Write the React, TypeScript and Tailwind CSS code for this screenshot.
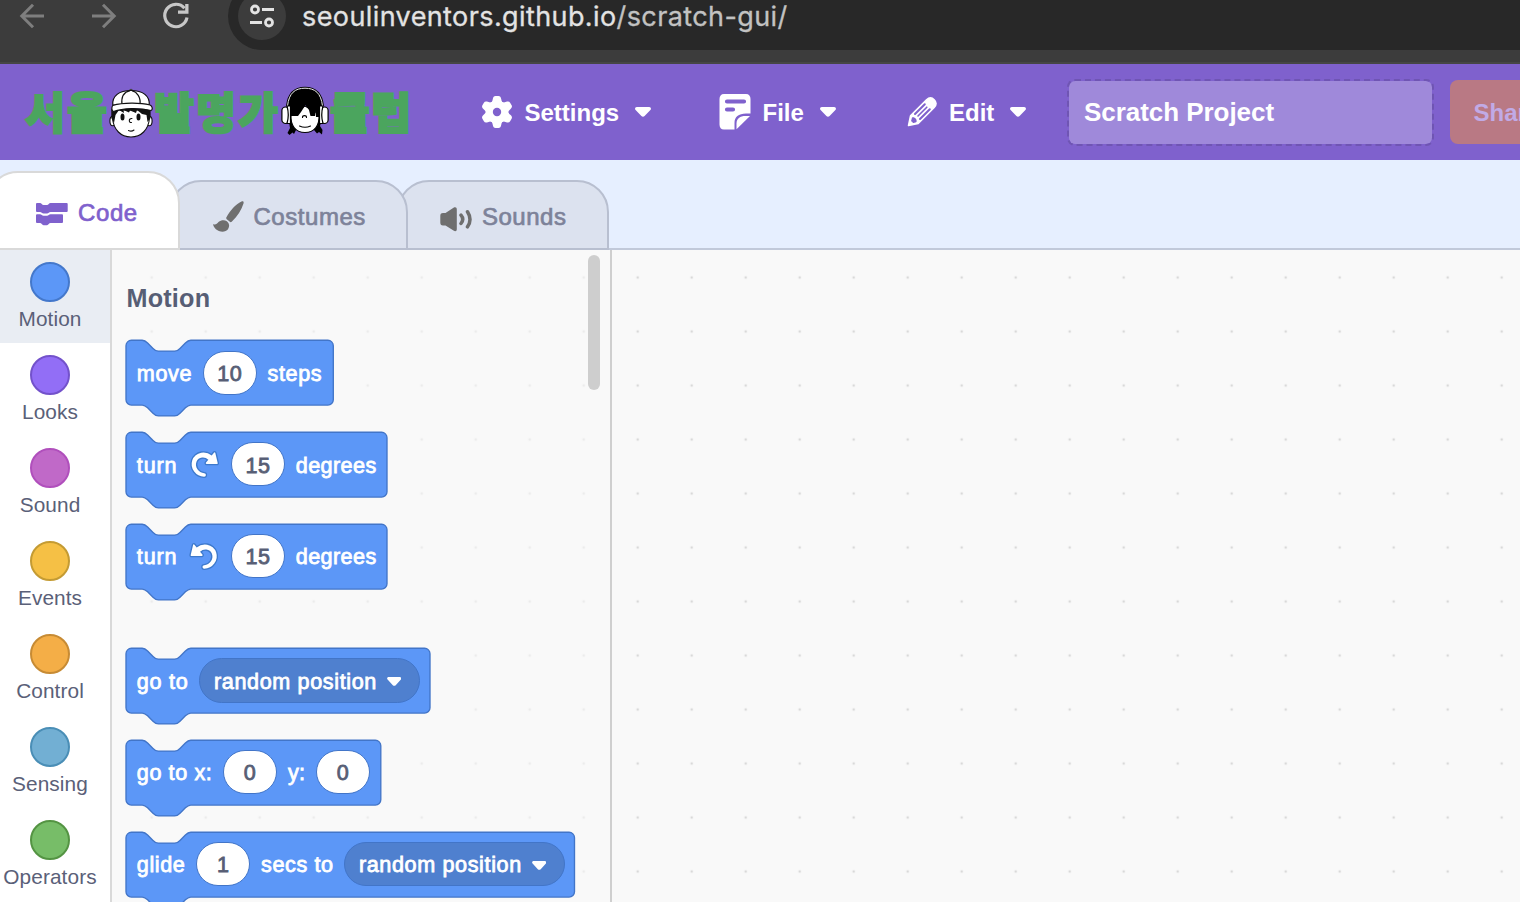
import type { ReactNode } from "react";

function Caret({ className = "" }: { className?: string }) {
  return (
    <svg className={className} width="16" height="10" viewBox="0 0 16 10" fill="#fff">
      <path d="M1.8 0H14.2C15.8 0 16.5 1.8 15.4 2.9L9.6 9.1C8.7 10 7.3 10 6.4 9.1L.6 2.9C-.5 1.8.2 0 1.8 0Z" />
    </svg>
  );
}

/* ---------- Browser toolbar ---------- */

function BrowserBar() {
  return (
    <div className="flex h-16 shrink-0 items-start overflow-hidden border-b-2 border-[#464646] bg-[#3c3c3c]">
      <svg className="shrink-0" width="228" height="50" fill="none" strokeWidth="3">
        <g stroke="#7e7e7e">
          <path d="M44 16H22M33 4.8L21.8 16L33 27.2" />
          <path d="M92 16H114M103 4.8L114.200 16L103 27.2" />
        </g>
        <path d="M184.500 8.200A11.200 11.200 0 1 0 187 17.500" stroke="#c7c7c7" strokeWidth="3.200" />
        <path d="M188.500 4V13.800H178V10.600H185.200V4Z" fill="#c7c7c7" />
      </svg>
      <div className="-mt-[18px] flex h-[68px] flex-1 items-center rounded-l-full bg-[#282828] pl-[10px]">
        <div className="flex size-12 items-center justify-center rounded-full bg-[#3c3c3c]">
          <svg width="48" height="48" fill="none" stroke="#e3e3e3" strokeWidth="2.800">
            <circle cx="17" cy="17.500" r="3.500" />
            <path d="M24 17.500H36M12 30.500H24" />
            <circle cx="31" cy="30.500" r="3.500" />
          </svg>
        </div>
        <div className="mt-[2px] ml-4 font-['Inter'] text-[27px] leading-8 tracking-[0.400px] whitespace-nowrap text-[#e3e3e3] [-webkit-text-stroke:0.300px_currentColor]">
          seoulinventors.github.io<span className="text-[#c2c2c2]">/scratch-gui/</span>
        </div>
      </div>
    </div>
  );
}

/* ---------- Logo ---------- */

function Syllables({ text, className = "" }: { text: string; className?: string }) {
  return (
    <div className={"flex " + className}>
      {text.split("").map((c) => (
        <span key={c} className="flex w-[42px] justify-center">
          {c}
        </span>
      ))}
    </div>
  );
}

function CapBoy() {
  return (
    <svg className="mt-[3px] shrink-0" width="44" height="50" viewBox="0 0 44 50">
      <g stroke="#111" strokeWidth="1.100">
        <ellipse cx="3.800" cy="33" rx="2.900" ry="4.800" fill="#fff" />
        <ellipse cx="40.200" cy="33" rx="2.900" ry="4.800" fill="#fff" />
        <path d="M3.500 22V30C4.500 42 12 49 22 49S39.500 42 40.500 30V22Z" fill="#fff" />
      </g>
      <path d="M2.300 21V30L5 35L6.500 27L10 22L15 25L14.500 22L20 24.500L21 22.500L27 25L28 22L33 26L37.500 27L38.500 34L41.600 30V21Z" fill="#111" />
      <ellipse cx="13.500" cy="29" rx="2" ry="3.600" fill="#111" />
      <ellipse cx="29.500" cy="29" rx="2" ry="3.600" fill="#111" />
      <g fill="none" stroke="#111" strokeWidth="1.100" strokeLinecap="round">
        <path d="M23 30.500C19.500 30 19.500 35 22.500 34.500M19.500 42.500Q22.500 44 25 42" />
      </g>
      <circle cx="22" cy="2.500" r="1.800" fill="#444" />
      <g fill="#fff" stroke="#111" strokeWidth="1.200">
        <path d="M3.800 17C3 8 10 2.500 22 2.500S41 8 40.200 17Z" />
        <path d="M13 17C12 9 15 4 21 2.700M31 17C32 9 28 4 23 2.700" fill="none" />
        <path d="M3.700 17.500C14 14.500 31 14.500 41 17C43.500 18 44 21.500 42 22.500C30 19.500 14 20 4.500 23.500C2.500 23 2.500 19 3.700 17.500Z" />
      </g>
    </svg>
  );
}

function HeadphoneGirl() {
  return (
    <svg className="shrink-0" width="48" height="50" viewBox="0 0 48 50">
      <path d="M7 30L9 42L6.500 47L8.500 49L11.500 46.500L13 48L15 44L33 44L36 47.500L38 46L41 48.500L41.500 44L39 40L42 30Z" fill="#000" />
      <path d="M10 28C9 40 15 46.500 24 46.500S39 40 38 28L24 20Z" fill="#fff" stroke="#000" strokeWidth="1.200" />
      <path d="M6 26C5 9 13 1.500 24 1.500S43 9 42 26L40 31H35L34.500 25L34 30H29.500L28 24L24.500 19L20 26L17 30H8Z" fill="#000" />
      <path d="M6.500 20C8 7 14 2.200 24 2.200S40 7 41.500 20" fill="none" stroke="#000" strokeWidth="3" />
      <path d="M6.500 20C8 7 14 2.200 24 2.200S40 7 41.500 20" fill="none" stroke="#eee" strokeWidth="1" />
      <g fill="#fff" stroke="#000" strokeWidth="1.200">
        <rect x=".9" y="21" width="7.200" height="16.500" rx="3.600" />
        <path d="M6 20H9.500V37.500H6Q8.500 29 6 20Z" />
        <rect x="39.900" y="21" width="7.200" height="16.500" rx="3.600" />
        <path d="M42 20H38.500V37.500H42Q39.500 29 42 20Z" />
      </g>
      <path d="M21.500 31.500C21.500 29 25.500 29 25.500 31.500M18.500 40Q24 42.500 29.500 40" fill="none" stroke="#000" strokeWidth="1.100" strokeLinecap="round" />
    </svg>
  );
}

function Logo() {
  return (
    <div className="-mt-[2px] flex w-[388px] shrink-0 items-center font-['Noto_Sans_CJK_KR',sans-serif] text-[43.500px] leading-[48px] font-black text-[#4ba55e] [-webkit-text-stroke:2px_#4ba55e]">
      <Syllables text="서울" className="w-[85px]" />
      <CapBoy />
      <Syllables text="발명가" className="w-[128px]" />
      <HeadphoneGirl />
      <Syllables text="클럽" className="w-[83px]" />
    </div>
  );
}

/* ---------- Menu bar ---------- */

function GearIcon() {
  return (
    <svg width="32" height="32" viewBox="-16 -16 32 32" fill="#fff">
      <circle r="11.300" />
      {[0, 60, 120, 180, 240, 300].map((a) => (
        <path
          key={a}
          transform={`rotate(${a})`}
          d="M-7.500 -8C-5 -9.500 -4.600 -11 -4.200 -13C-3.900 -15 -3 -16 -1.500 -16H1.500C3 -16 3.900 -15 4.200 -13C4.600 -11 5 -9.500 7.500 -8Z"
        />
      ))}
      <circle r="4.200" fill="#7f61cd" />
    </svg>
  );
}

function FileIcon() {
  return (
    <svg width="32" height="36" viewBox="0 0 32 36" fill="#fff">
      <path d="M5 0H27C30 0 31.500 2 31.500 5V19.500H27C19.500 19.500 15.500 23 15.500 29V35.500H5C2 35.500 .5 33.500 .5 30.500V5C.5 2 2 0 5 0Z" />
      <path d="M31 22L17.500 35.200V29.500C17.500 24.500 21 22 26.500 22Z" />
      <path d="M8 7.500H25M8 15.500H14" stroke="#7f61cd" strokeWidth="4.200" strokeLinecap="round" />
    </svg>
  );
}

function PencilIcon() {
  return (
    <svg width="30" height="30" viewBox="0 0 30 30" fill="none">
      <path
        d="M1.500 28.500L3.500 18.800L19.500 2.800C22 .5 25 .5 27.200 2.700C29.500 5 29.500 8 27.200 10.500L11.200 26.500L1.500 28.500Z"
        fill="#fff"
        stroke="#fff"
        strokeWidth="1.500"
        strokeLinejoin="round"
      />
      <g stroke="#7f61cd" strokeLinecap="round">
        <path d="M8 17L17.800 7.200M13 22L22.800 12.200" strokeWidth="2" />
        <path d="M11 19L19.800 10.200" strokeWidth="1.600" />
      </g>
      <path d="M5 20.500C7.500 19.500 10.500 22.500 9.500 25C8 25.800 6.800 26 6 26C5.600 25 4.800 24.400 4 24.200Z" fill="#7f61cd" />
    </svg>
  );
}

function MenuItem({ icon, label, className = "" }: { icon: ReactNode; label: string; className?: string }) {
  return (
    <div className={"flex shrink-0 items-center text-2xl font-bold text-white " + className}>
      {icon}
      <span className="mt-[2px] ml-[11.500px] whitespace-nowrap">{label}</span>
      <Caret className="ml-4" />
    </div>
  );
}

function MenuBar() {
  return (
    <div className="flex h-24 shrink-0 items-center overflow-hidden bg-[#7f61cd] pl-6">
      <Logo />
      <MenuItem icon={<GearIcon />} label="Settings" className="ml-[69px] w-[238px]" />
      <MenuItem icon={<FileIcon />} label="File" className="w-[188px]" />
      <MenuItem icon={<PencilIcon />} label="Edit" className="w-[160px] [&>span]:ml-3" />
      <div className="flex h-[67px] w-[366.500px] shrink-0 items-center rounded-lg border-2 border-dashed border-[#6f55b3] bg-[#9f89da] bg-clip-padding pl-[15px] text-[26px] font-bold tracking-[-0.050px] text-white">
        Scratch Project
      </div>
      <div className="ml-4 flex h-16 w-[130px] shrink-0 items-center rounded-lg bg-[#b97984] pt-px pl-6 text-2xl font-bold text-[#c1aae6]">
        Share
      </div>
    </div>
  );
}

/* ---------- Tabs ---------- */

function CodeIcon() {
  return (
    <svg className="mt-[2px]" width="32" height="23" viewBox="0 0 32 23" fill="#7f61cd">
      <path d="M1 0H4C5.500 0 6 2 7.500 2H11C12.500 2 13 0 14.500 0H30.700Q31.700 0 31.700 1V8Q31.700 9 30.700 9H14.500C13 9 12.500 10.500 11 10.500H7.500C6 10.500 5.500 9 4 9H1Q0 9 0 8V1Q0 0 1 0Z" />
      <path d="M1 11.200H4C5.500 11.200 6 12.800 7.500 12.800H11C12.500 12.800 13 11.200 14.500 11.200H26Q27 11.200 27 12.200V19Q27 20 26 20H14.500C13 20 12.500 22.200 11 22.200H7.500C6 22.200 5.500 20 4 20H1Q0 20 0 19V12.200Q0 11.200 1 11.200Z" />
    </svg>
  );
}

function BrushIcon() {
  return (
    <svg width="31" height="32" viewBox="0 0 31 32" fill="#6f6f6f">
      <path d="M13.300 16.500C17 9.500 22.500 3.500 28.500 .5C30.200 -.1 31 .8 30.500 2.500C28.500 9 24.500 15.500 18.700 20.700C17.500 21.700 16.800 21 16 20L13.700 18.200C13.200 17.600 13 17 13.300 16.500Z" />
      <path d="M.5 23.200C2.500 24.500 4 22.500 5.500 21C8 18.900 11.500 18.700 13.800 20.200C16.500 22 16.800 25.500 15 28.300C12 32.200 3 31.800 .2 24Q-.1 22.900 .5 23.200Z" />
    </svg>
  );
}

function SpeakerIcon() {
  return (
    <svg className="mt-[4px]" width="32" height="25" viewBox="0 0 32 25" fill="none">
      <path d="M3 6H5.500L13.500 .8C15.500 -.2 16.800 .5 16.800 2.500V22C16.800 24.200 15.500 24.800 13.500 23.600L5.500 18.500H3C1 18.500 .3 17.300 .3 15.500V9C.3 7.200 1 6 3 6Z" fill="#6f6f6f" />
      <path d="M21 8.200Q24.500 12.300 21 16.500M27.500 4.800Q32.500 12.500 27.500 19.800" stroke="#6f6f6f" strokeWidth="3.500" strokeLinecap="round" />
    </svg>
  );
}

function Tabs() {
  const idle = "flex h-[70px] items-center rounded-t-[32px] border-2 border-[#b8bfd0] bg-[#dce2ef] pt-1 text-2xl text-[#7d8299] [-webkit-text-stroke:0.700px_#7d8299]";
  return (
    <div className="flex h-[90px] shrink-0 items-end bg-[#e6efff] shadow-[inset_0_-2px_0_#c1c9da]">
      <div className="z-20 -ml-[14px] flex h-[79px] w-[194px] items-center rounded-t-[32px] border-2 border-[#d9d9d9] bg-white pt-[5px] pl-12 text-2xl text-[#7f61cd] [-webkit-text-stroke:0.700px_#7f61cd]">
        <CodeIcon />
        <span className="ml-[10px] tracking-[0.600px]">Code</span>
      </div>
      <div className={"z-10 -ml-[11px] w-[239px] pl-[42px] " + idle}>
        <BrushIcon />
        <span className="ml-[9.500px] tracking-[0.540px]">Costumes</span>
      </div>
      <div className={"-ml-[11px] w-[212px] pl-[41px] " + idle}>
        <SpeakerIcon />
        <span className="ml-[10px] tracking-[0.500px]">Sounds</span>
      </div>
    </div>
  );
}

/* ---------- Category column ---------- */

const categories = [
  { name: "Motion", dot: "border-[#4478cb] bg-[#5c97f7]", row: "bg-[#e9edf3]" },
  { name: "Looks", dot: "border-[#7352cb] bg-[#926ef6]", row: "" },
  { name: "Sound", dot: "border-[#b04fbc] bg-[#c069c8]", row: "" },
  { name: "Events", dot: "border-[#c49b33] bg-[#f5c045]", row: "" },
  { name: "Control", dot: "border-[#c78b34] bg-[#f4ae47]", row: "" },
  { name: "Sensing", dot: "border-[#4a8eb6] bg-[#72afd3]", row: "" },
  { name: "Operators", dot: "border-[#549443] bg-[#77bd68]", row: "" },
];

function Categories() {
  return (
    <div className="flex w-28 shrink-0 flex-col border-r-2 border-[#d9d9d9] bg-white">
      {categories.map((c) => (
        <div key={c.name} className={"flex h-[93px] shrink-0 flex-col items-center pt-3 pr-[10px] " + c.row}>
          <div className={"size-10 shrink-0 rounded-full border-2 " + c.dot} />
          <span className="mt-1 text-[20.800px] leading-[26px] tracking-[0.100px] text-[#5a6078]">{c.name}</span>
        </div>
      ))}
    </div>
  );
}

/* ---------- Blocks ---------- */

function Block({ width, children }: { width: number; children: ReactNode }) {
  const w = width / 1.35;
  const d = `M0 4A4 4 0 0 1 4 0H12c2 0 3 1 4 2l4 4c1 1 2 2 4 2h12c2 0 3-1 4-2l4-4c1-1 2-2 4-2H${w - 4}a4 4 0 0 1 4 4v40a4 4 0 0 1-4 4H48c-2 0-3 1-4 2l-4 4c-1 1-2 2-4 2h-12c-2 0-3-1-4-2l-4-4c-1-1-2-2-4-2H4a4 4 0 0 1-4-4z`;
  return (
    <div className="relative flex h-[64.800px] shrink-0 items-center gap-[10.800px] px-[10.800px]" style={{ width }}>
      <svg className="absolute inset-0 overflow-visible" width={width} height="76">
        <path transform="translate(0 .3) scale(1.35)" d={d} fill="#5c97f7" stroke="#4275c8" />
      </svg>
      {children}
    </div>
  );
}

function Label({ children, className }: { children: string; className: string }) {
  return (
    <span className={"relative mt-[2.800px] shrink-0 text-[21.600px] whitespace-nowrap text-white [-webkit-text-stroke:0.800px_#fff] " + className}>
      {children}
    </span>
  );
}

function NumberField({ value }: { value: string }) {
  return (
    <span className="relative flex h-[44px] w-[54px] shrink-0 items-center justify-center rounded-full border border-[#4275c8] bg-white pt-[2.800px] text-[21.600px] tracking-[0.500px] text-[#575e75] [-webkit-text-stroke:0.800px_#575e75]">
      {value}
    </span>
  );
}

function Dropdown({ value }: { value: string }) {
  return (
    <span className="relative flex h-[44.500px] w-[220.700px] shrink-0 items-center rounded-full border border-[#4275c8] bg-[#4f80cf] pl-[14px]">
      <span className="w-[173px] shrink-0 pt-[2.800px] text-[21.600px] tracking-[0.620px] whitespace-nowrap text-white [-webkit-text-stroke:0.800px_#fff]">{value}</span>
      <Caret className="mt-[3px] h-[9px] w-[14.500px]" />
    </span>
  );
}

function TurnIcon({ left = false }: { left?: boolean }) {
  return (
    <svg className={"relative shrink-0 " + (left ? "-scale-x-100" : "")} width="32.4" height="32.4" viewBox="0 0 24 24">
      <path
        fill="#3d79cc"
        d="M22.68,12.2a1.6,1.6,0,0,1-1.27.63H13.72a1.59,1.59,0,0,1-1.16-2.58l1.12-1.41a4.82,4.82,0,0,0-3.14-.77,4.31,4.31,0,0,0-2,.8,4.25,4.25,0,0,0-1.34,1.73,5.06,5.06,0,0,0,.54,4.62A5.58,5.58,0,0,0,12,17.74h0a2.26,2.26,0,0,1-.16,4.52A10.25,10.25,0,0,1,3.74,18,10.14,10.14,0,0,1,2.25,8.78,9.7,9.7,0,0,1,5.08,4.64,9.92,9.92,0,0,1,9.66,2.5a10.66,10.66,0,0,1,7.72,1.68l1.08-1.35a1.57,1.57,0,0,1,1.24-.6,1.6,1.6,0,0,1,1.54,1.21l1.7,7.37A1.57,1.57,0,0,1,22.68,12.2Z"
      />
      <path
        fill="#fff"
        d="M21.38,11.83H13.77a.59.59,0,0,1-.43-1l1.75-2.19a5.9,5.9,0,0,0-4.7-1.58,5.07,5.07,0,0,0-4.11,3.17A6,6,0,0,0,7,15.77a6.51,6.51,0,0,0,5,2.92,1.31,1.31,0,0,1-.08,2.62,9.3,9.3,0,0,1-7.35-3.82A9.16,9.16,0,0,1,3.17,9.12,8.51,8.51,0,0,1,5.71,5.4,8.76,8.76,0,0,1,9.82,3.48a9.71,9.71,0,0,1,7.75,2.07l1.67-2.1a.59.59,0,0,1,1,.21L22,11.08A.59.59,0,0,1,21.38,11.83Z"
      />
    </svg>
  );
}

function Palette() {
  return (
    <div className="flex w-[500px] shrink-0 items-start border-r-2 border-[#cfcfcf] bg-[#f9f9f9]/60">
      <div className="flex w-[476px] shrink-0 flex-col pl-[14px]">
        <h2 className="mt-8 ml-[0.500px] h-[58.300px] text-[25.200px] leading-8 font-bold tracking-[0.200px] text-[#575e75]">Motion</h2>
        <div className="flex flex-col gap-[27px]">
          <Block width={207.3}>
            <Label className="w-[55.200px] tracking-[0.600px]">move</Label>
            <NumberField value="10" />
            <Label className="w-[56px] tracking-[0.600px]">steps</Label>
          </Block>
          <Block width={261}>
            <Label className="w-[40.200px] tracking-[0.850px]">turn</Label>
            <TurnIcon />
            <NumberField value="15" />
            <Label className="w-[82px] tracking-[0.400px]">degrees</Label>
          </Block>
          <Block width={261}>
            <Label className="w-[40.200px] tracking-[0.850px]">turn</Label>
            <TurnIcon left />
            <NumberField value="15" />
            <Label className="w-[82px] tracking-[0.400px]">degrees</Label>
          </Block>
        </div>
        <div className="mt-[59.400px] flex flex-col gap-[27px]">
          <Block width={304}>
            <Label className="w-[51.400px] tracking-[0.750px]">go to</Label>
            <Dropdown value="random position" />
          </Block>
          <Block width={254.8}>
            <Label className="w-[75.500px] tracking-[0.600px]">go to x:</Label>
            <NumberField value="0" />
            <Label className="w-[17.400px] tracking-[0.200px]">y:</Label>
            <NumberField value="0" />
          </Block>
          <Block width={448.5}>
            <Label className="w-[48.700px] tracking-[0.600px]">glide</Label>
            <NumberField value="1" />
            <Label className="w-[72px] tracking-[0.600px]">secs to</Label>
            <Dropdown value="random position" />
          </Block>
        </div>
      </div>
      <div className="mt-[5px] h-[135px] w-3 rounded-full bg-[#cecece]" />
    </div>
  );
}

export default function App() {
  return (
    <div className="flex h-[902px] w-[1520px] flex-col overflow-hidden bg-[#f9f9f9] font-['Liberation_Sans',Arial,sans-serif]">
      <BrowserBar />
      <MenuBar />
      <Tabs />
      <div className="flex min-h-0 flex-1 overflow-hidden">
        <Categories />
        <div className="flex min-w-0 flex-1 bg-[radial-gradient(circle_at_27px_27px,#d9d9d9_1px,transparent_1.700px)] bg-[size:54px_54px] bg-[position:12.700px_0.500px]">
          <Palette />
        </div>
      </div>
    </div>
  );
}
